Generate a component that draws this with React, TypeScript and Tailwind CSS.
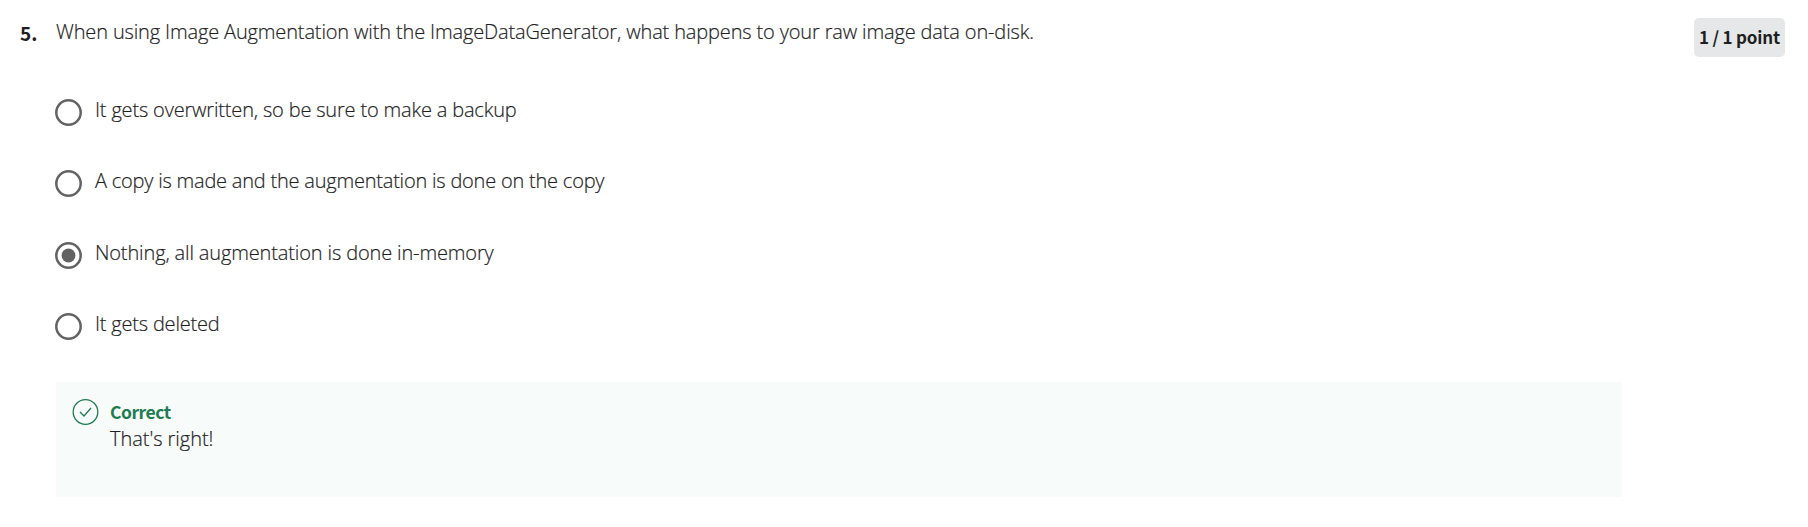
const options = [
  { text: "It gets overwritten, so be sure to make a backup", tracking: "tracking-[-0.175px]" },
  { text: "A copy is made and the augmentation is done on the copy", tracking: "tracking-[-0.215px]" },
  { text: "Nothing, all augmentation is done in-memory", tracking: "tracking-[-0.14px]" },
  { text: "It gets deleted", tracking: "tracking-[-0.2px]" },
];

function Radio({ selected }: { selected: boolean }) {
  return (
    <svg className="mt-[3px] size-[27px] shrink-0" viewBox="0 0 27 27">
      <circle cx="13.5" cy="13.5" r="12.2" fill="none" stroke="#636363" strokeWidth="2.5" />
      {selected && <circle cx="13.5" cy="13.5" r="6.9" fill="#636363" />}
    </svg>
  );
}

export default function App() {
  return (
    <main className="flex h-[527px] bg-white pl-5 font-['Open_Sans',sans-serif] text-[20px] leading-[27px] text-[#1f1f1f]">
      <div className="w-9 shrink-0 pt-[19px] font-['Noto_Sans_CJK_SC',sans-serif] text-[19px] font-bold">5.</div>
      <div className="w-[1566px] shrink-0 pt-[18px]">
        <h1 className="font-light tracking-[-0.146px] [-webkit-text-stroke:0.2px_#1f1f1f]">When using Image Augmentation with the ImageDataGenerator, what happens to your raw image data on-disk.</h1>
        <div className="-ml-[1.5px] mt-[51px] flex flex-col [-webkit-text-stroke:0.2px_#1f1f1f]">
          {options.map((o, i) => (
            <label key={o.text} className="flex h-[71.4px] gap-[13.5px] font-light">
              <Radio selected={i === 2} />
              <span className={o.tracking}>{o.text}</span>
            </label>
          ))}
        </div>
        <section className="flex h-[115px] gap-[11px] bg-[#f7fbfa] pl-4 pt-[17px]">
          <svg className="size-[27px] shrink-0" viewBox="0 0 27 27" fill="none" stroke="#1d7c50" strokeWidth="1.3">
            <circle cx="13.5" cy="13" r="12.3" />
            <path d="M8 13l4 4 7-8" />
          </svg>
          <div className="-mt-px">
            <div className="font-['Noto_Sans_CJK_SC',sans-serif] text-[17.5px] font-bold tracking-[-0.5px] text-[#1d7c50]">Correct</div>
            <div className="font-light tracking-[-0.05px] [-webkit-text-stroke:0.2px_#1f1f1f]">That's right!</div>
          </div>
        </section>
      </div>
      <div className="ml-[72px] mt-[18px] flex h-[39px] w-[91px] shrink-0 items-center justify-center whitespace-nowrap rounded-[5px] bg-[#e5e7e8] pb-[2px] font-['Noto_Sans_CJK_SC',sans-serif] text-[17px] font-bold tracking-[-0.2px]">1 / 1 point</div>
    </main>
  );
}
